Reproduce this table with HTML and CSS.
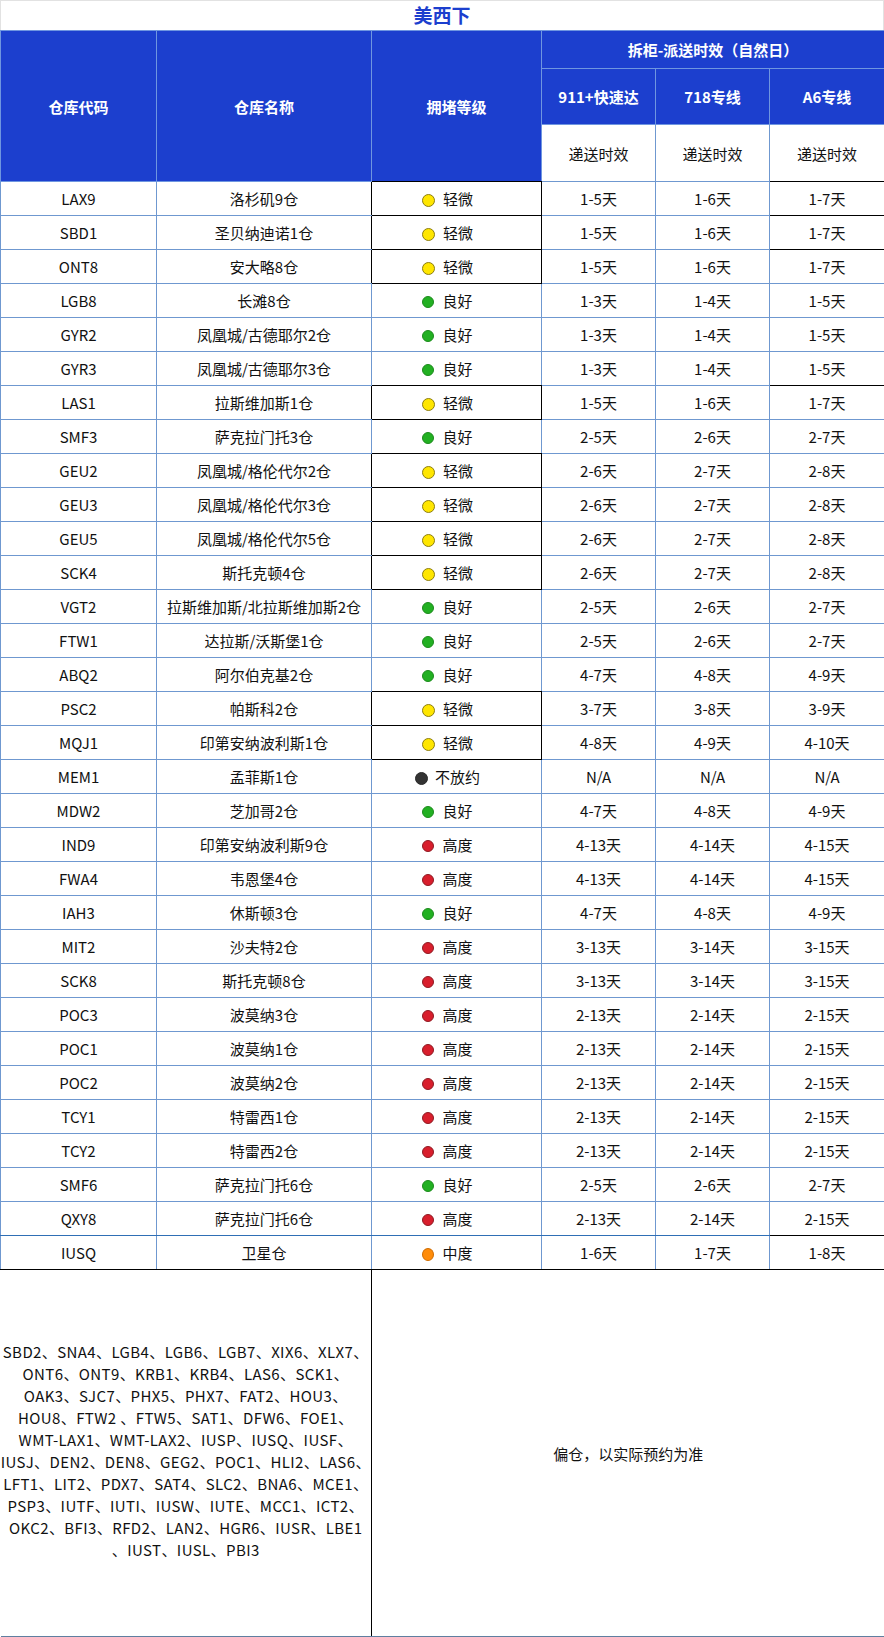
FILE: index.html
```html
<!DOCTYPE html>
<html lang="zh-CN">
<head>
<meta charset="utf-8">
<title>美西下</title>
<link rel="stylesheet" href="styles.css">
</head>
<body>
<div class="title">美西下</div>
<table class="grid">
  <colgroup>
    <col class="c-code"><col class="c-name"><col class="c-lvl"><col class="c-t"><col class="c-t"><col class="c-t6">
  </colgroup>
  <thead>
    <tr class="h1">
      <th rowspan="3">仓库代码</th>
      <th rowspan="3">仓库名称</th>
      <th rowspan="3" class="hlvl">拥堵等级</th>
      <th colspan="3">拆柜-派送时效（自然日）</th>
    </tr>
    <tr class="h2">
      <th>911+快速达</th>
      <th>718专线</th>
      <th>A6专线</th>
    </tr>
    <tr class="h3">
      <td class="sub">递送时效</td>
      <td class="sub">递送时效</td>
      <td class="sub a6">递送时效</td>
    </tr>
  </thead>
  <tbody>
    <tr class="k a"><td>LAX9</td><td class="nm">洛杉矶9仓</td><td class="lvl"><span class="dot y"></span>轻微</td><td>1-5天</td><td>1-6天</td><td class="a6">1-7天</td></tr>
    <tr class="k a"><td>SBD1</td><td class="nm">圣贝纳迪诺1仓</td><td class="lvl"><span class="dot y"></span>轻微</td><td>1-5天</td><td>1-6天</td><td class="a6">1-7天</td></tr>
    <tr class="k a"><td>ONT8</td><td class="nm">安大略8仓</td><td class="lvl"><span class="dot y"></span>轻微</td><td>1-5天</td><td>1-6天</td><td class="a6">1-7天</td></tr>
    <tr><td>LGB8</td><td class="nm">长滩8仓</td><td class="lvl"><span class="dot g"></span>良好</td><td>1-3天</td><td>1-4天</td><td class="a6">1-5天</td></tr>
    <tr><td>GYR2</td><td class="nm">凤凰城/古德耶尔2仓</td><td class="lvl"><span class="dot g"></span>良好</td><td>1-3天</td><td>1-4天</td><td class="a6">1-5天</td></tr>
    <tr><td>GYR3</td><td class="nm">凤凰城/古德耶尔3仓</td><td class="lvl"><span class="dot g"></span>良好</td><td>1-3天</td><td>1-4天</td><td class="a6">1-5天</td></tr>
    <tr class="k a"><td>LAS1</td><td class="nm">拉斯维加斯1仓</td><td class="lvl"><span class="dot y"></span>轻微</td><td>1-5天</td><td>1-6天</td><td class="a6">1-7天</td></tr>
    <tr><td>SMF3</td><td class="nm">萨克拉门托3仓</td><td class="lvl"><span class="dot g"></span>良好</td><td>2-5天</td><td>2-6天</td><td class="a6">2-7天</td></tr>
    <tr class="k"><td>GEU2</td><td class="nm">凤凰城/格伦代尔2仓</td><td class="lvl"><span class="dot y"></span>轻微</td><td>2-6天</td><td>2-7天</td><td class="a6">2-8天</td></tr>
    <tr class="k"><td>GEU3</td><td class="nm">凤凰城/格伦代尔3仓</td><td class="lvl"><span class="dot y"></span>轻微</td><td>2-6天</td><td>2-7天</td><td class="a6">2-8天</td></tr>
    <tr class="k"><td>GEU5</td><td class="nm">凤凰城/格伦代尔5仓</td><td class="lvl"><span class="dot y"></span>轻微</td><td>2-6天</td><td>2-7天</td><td class="a6">2-8天</td></tr>
    <tr class="k"><td>SCK4</td><td class="nm">斯托克顿4仓</td><td class="lvl"><span class="dot y"></span>轻微</td><td>2-6天</td><td>2-7天</td><td class="a6">2-8天</td></tr>
    <tr><td>VGT2</td><td class="nm">拉斯维加斯/北拉斯维加斯2仓</td><td class="lvl"><span class="dot g"></span>良好</td><td>2-5天</td><td>2-6天</td><td class="a6">2-7天</td></tr>
    <tr><td>FTW1</td><td class="nm">达拉斯/沃斯堡1仓</td><td class="lvl"><span class="dot g"></span>良好</td><td>2-5天</td><td>2-6天</td><td class="a6">2-7天</td></tr>
    <tr><td>ABQ2</td><td class="nm">阿尔伯克基2仓</td><td class="lvl"><span class="dot g"></span>良好</td><td>4-7天</td><td>4-8天</td><td class="a6">4-9天</td></tr>
    <tr class="k"><td>PSC2</td><td class="nm">帕斯科2仓</td><td class="lvl"><span class="dot y"></span>轻微</td><td>3-7天</td><td>3-8天</td><td class="a6">3-9天</td></tr>
    <tr class="k"><td>MQJ1</td><td class="nm">印第安纳波利斯1仓</td><td class="lvl"><span class="dot y"></span>轻微</td><td>4-8天</td><td>4-9天</td><td class="a6">4-10天</td></tr>
    <tr><td>MEM1</td><td class="nm">孟菲斯1仓</td><td class="lvl"><span class="dot b"></span>不放约</td><td>N/A</td><td>N/A</td><td class="a6">N/A</td></tr>
    <tr><td>MDW2</td><td class="nm">芝加哥2仓</td><td class="lvl"><span class="dot g"></span>良好</td><td>4-7天</td><td>4-8天</td><td class="a6">4-9天</td></tr>
    <tr><td>IND9</td><td class="nm">印第安纳波利斯9仓</td><td class="lvl"><span class="dot r"></span>高度</td><td>4-13天</td><td>4-14天</td><td class="a6">4-15天</td></tr>
    <tr><td>FWA4</td><td class="nm">韦恩堡4仓</td><td class="lvl"><span class="dot r"></span>高度</td><td>4-13天</td><td>4-14天</td><td class="a6">4-15天</td></tr>
    <tr><td>IAH3</td><td class="nm">休斯顿3仓</td><td class="lvl"><span class="dot g"></span>良好</td><td>4-7天</td><td>4-8天</td><td class="a6">4-9天</td></tr>
    <tr><td>MIT2</td><td class="nm">沙夫特2仓</td><td class="lvl"><span class="dot r"></span>高度</td><td>3-13天</td><td>3-14天</td><td class="a6">3-15天</td></tr>
    <tr><td>SCK8</td><td class="nm">斯托克顿8仓</td><td class="lvl"><span class="dot r"></span>高度</td><td>3-13天</td><td>3-14天</td><td class="a6">3-15天</td></tr>
    <tr><td>POC3</td><td class="nm">波莫纳3仓</td><td class="lvl"><span class="dot r"></span>高度</td><td>2-13天</td><td>2-14天</td><td class="a6">2-15天</td></tr>
    <tr><td>POC1</td><td class="nm">波莫纳1仓</td><td class="lvl"><span class="dot r"></span>高度</td><td>2-13天</td><td>2-14天</td><td class="a6">2-15天</td></tr>
    <tr><td>POC2</td><td class="nm">波莫纳2仓</td><td class="lvl"><span class="dot r"></span>高度</td><td>2-13天</td><td>2-14天</td><td class="a6">2-15天</td></tr>
    <tr><td>TCY1</td><td class="nm">特雷西1仓</td><td class="lvl"><span class="dot r"></span>高度</td><td>2-13天</td><td>2-14天</td><td class="a6">2-15天</td></tr>
    <tr><td>TCY2</td><td class="nm">特雷西2仓</td><td class="lvl"><span class="dot r"></span>高度</td><td>2-13天</td><td>2-14天</td><td class="a6">2-15天</td></tr>
    <tr><td>SMF6</td><td class="nm">萨克拉门托6仓</td><td class="lvl"><span class="dot g"></span>良好</td><td>2-5天</td><td>2-6天</td><td class="a6">2-7天</td></tr>
    <tr><td>QXY8</td><td class="nm">萨克拉门托6仓</td><td class="lvl"><span class="dot r"></span>高度</td><td>2-13天</td><td>2-14天</td><td class="a6">2-15天</td></tr>
    <tr class="last"><td>IUSQ</td><td class="nm">卫星仓</td><td class="lvl"><span class="dot o"></span>中度</td><td>1-6天</td><td>1-7天</td><td class="a6">1-8天</td></tr>
    <tr class="foot">
      <td colspan="2" class="fl">SBD2、SNA4、LGB4、LGB6、LGB7、XIX6、XLX7、<br>ONT6、ONT9、KRB1、KRB4、LAS6、SCK1、<br>OAK3、SJC7、PHX5、PHX7、FAT2、HOU3、<br>HOU8、FTW2 、FTW5、SAT1、DFW6、FOE1、<br>WMT-LAX1、WMT-LAX2、IUSP、IUSQ、IUSF、<br>IUSJ、DEN2、DEN8、GEG2、POC1、HLI2、LAS6、<br>LFT1、LIT2、PDX7、SAT4、SLC2、BNA6、MCE1、<br>PSP3、IUTF、IUTI、IUSW、IUTE、MCC1、ICT2、<br>OKC2、BFI3、RFD2、LAN2、HGR6、IUSR、LBE1<br>、IUST、IUSL、PBI3</td>
      <td colspan="4" class="fr">偏仓，以实际预约为准</td>
    </tr>
  </tbody>
</table>
</body>
</html>
```

FILE: styles.css
```css
* { box-sizing: border-box; }
html, body { margin: 0; padding: 0; background: #fff; }
body {
  width: 884px;
  font-family: "Noto Sans CJK SC", "Microsoft YaHei", sans-serif;
  font-size: 15px;
  color: #111;
}

.title {
  height: 30px;
  border: 1px solid #e2e2e2;
  border-bottom: 0;
  text-align: center;
  font-size: 19px;
  line-height: 28px;
  font-weight: 700;
  color: #1c3fce;
}

.grid {
  width: 884px;
  border-collapse: collapse;
  table-layout: fixed;
}
.c-code { width: 156px; }
.c-name { width: 215px; }
.c-lvl { width: 170px; }
.c-t { width: 114px; }
.c-t6 { width: 115px; }

.grid th, .grid td {
  border: 1px solid #6f98d0;
  padding: 0;
  text-align: center;
  vertical-align: middle;
  font-weight: 400;
  white-space: nowrap;
}

.grid thead th {
  background: #1c3fce;
  color: #fff;
  font-weight: 700;
  border-color: #6f96e0;
}
.grid .h1 th { height: 38px; }
.grid .h2 th { height: 56px; }
.grid .h3 td { height: 57px; }
.grid thead .sub { background: #fff; color: #111; }

.grid tbody td { height: 34px; }

/* congestion level cell */
.grid td.lvl { padding-right: 18px; }
.dot {
  display: inline-block;
  width: 12px;
  height: 12px;
  border-radius: 50%;
  margin-right: 8px;
  vertical-align: -1px;
  border: 1px solid transparent;
}
.dot.y { background: #ffe600; border-color: #8c7d10; width: 13px; height: 13px; vertical-align: -2px; }
.dot.g { background: #22b022; border-color: #1c8a1c; }
.dot.r { background: #d81e2c; border-color: #8e1a22; }
.dot.b { background: #333; border-color: #2a2a2a; width: 13px; height: 13px; margin-right: 7px; vertical-align: -2px; }
.dot.o { background: #ff8c0a; border-color: #d06c00; width: 12px; height: 13px; vertical-align: -2px; }

/* black outlined cells */
.grid .hlvl { border-bottom-color: #000; }
.grid .h3 .a6 { border-bottom-color: #000; }
.grid tr.k td.lvl { border-color: #000; }
.grid tr.k td.nm { border-right-color: #000; }
.grid tr:has(+ tr.k) td.lvl { border-bottom-color: #000; }
.grid tr.a td.a6 { border-top-color: #000; border-right-color: #000; }
.grid tr:has(+ tr.a) td.a6 { border-bottom-color: #000; }

/* last data row */
.grid tr:has(+ tr.last) td { border-bottom-color: #2f6fb5; }
.grid tr:has(+ tr.last) td.a6 { border-bottom-color: #000; }
.grid tr.last td { border-bottom-color: #000; }
.grid tr.last td.a6 { border-top-color: #000; }

/* footer */
.grid tr.foot td {
  height: 367px;
  border-color: #000;
  border-bottom-color: #5f7fa0;
}
.grid tr.foot td.fl {
  border-left-style: none;
  line-height: 22px;
  letter-spacing: 0.4px;
  padding-bottom: 4px;
}
.grid tr.foot td.fr {
  border-right-style: none;
}
```
